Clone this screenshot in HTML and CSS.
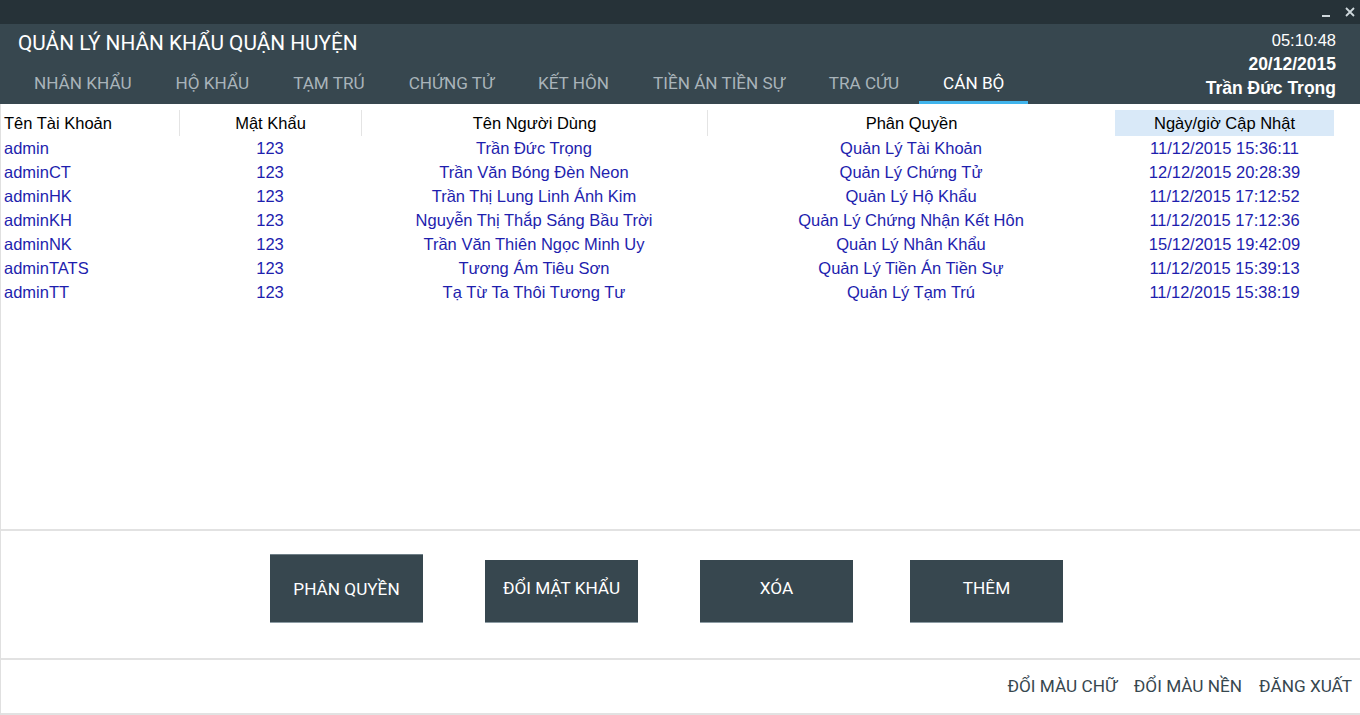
FILE: index.html
```html
<!DOCTYPE html>
<html lang="vi">
<head>
<meta charset="utf-8">
<title>Quản lý nhân khẩu quận huyện</title>
<link rel="stylesheet" href="styles.css">
</head>
<body>
<div class="app">
  <div class="titlebar">
    <svg class="win-btn" width="14" height="14" viewBox="0 0 14 14"><rect x="3" y="10" width="8" height="2" fill="#cfd8dc"/></svg>
    <svg class="win-btn" width="14" height="14" viewBox="0 0 14 14"><path d="M3 3 L11 11 M11 3 L3 11" stroke="#cfd8dc" stroke-width="1.8"/></svg>
  </div>
  <header class="header">
    <div class="header-left">
      <div class="app-title">QUẢN LÝ NHÂN KHẨU QUẬN HUYỆN</div>
      <nav class="tabs">
        <span class="tab">NHÂN KHẨU</span>
        <span class="tab">HỘ KHẨU</span>
        <span class="tab">TẠM TRÚ</span>
        <span class="tab">CHỨNG TỬ</span>
        <span class="tab">KẾT HÔN</span>
        <span class="tab">TIỀN ÁN TIỀN SỰ</span>
        <span class="tab">TRA CỨU</span>
        <span class="tab active">CÁN BỘ</span>
      </nav>
    </div>
    <div class="header-right">
      <div class="clock">05:10:48</div>
      <div class="date">20/12/2015</div>
      <div class="user">Trần Đức Trọng</div>
    </div>
  </header>
  <main class="content">
    <section class="grid-wrap">
      <div class="grid">
        <div class="hcell c1">Tên Tài Khoản</div>
        <div class="hcell c2 sep">Mật Khẩu</div>
        <div class="hcell c3 sep">Tên Người Dùng</div>
        <div class="hcell c4 sep">Phân Quyền</div>
        <div class="hcell c5 sorted">Ngày/giờ Cập Nhật</div>
        <div class="hcell c6"></div>

        <div class="cell c1">admin</div><div class="cell">123</div><div class="cell">Trần Đức Trọng</div><div class="cell">Quản Lý Tài Khoản</div><div class="cell">11/12/2015 15:36:11</div><div class="cell"></div>
        <div class="cell c1">adminCT</div><div class="cell">123</div><div class="cell">Trần Văn Bóng Đèn Neon</div><div class="cell">Quản Lý Chứng Tử</div><div class="cell">12/12/2015 20:28:39</div><div class="cell"></div>
        <div class="cell c1">adminHK</div><div class="cell">123</div><div class="cell">Trần Thị Lung Linh Ánh Kim</div><div class="cell">Quản Lý Hộ Khẩu</div><div class="cell">11/12/2015 17:12:52</div><div class="cell"></div>
        <div class="cell c1">adminKH</div><div class="cell">123</div><div class="cell">Nguyễn Thị Thắp Sáng Bầu Trời</div><div class="cell">Quản Lý Chứng Nhận Kết Hôn</div><div class="cell">11/12/2015 17:12:36</div><div class="cell"></div>
        <div class="cell c1">adminNK</div><div class="cell">123</div><div class="cell">Trần Văn Thiên Ngọc Minh Uy</div><div class="cell">Quản Lý Nhân Khẩu</div><div class="cell">15/12/2015 19:42:09</div><div class="cell"></div>
        <div class="cell c1">adminTATS</div><div class="cell">123</div><div class="cell">Tương Ám Tiêu Sơn</div><div class="cell">Quản Lý Tiền Án Tiền Sự</div><div class="cell">11/12/2015 15:39:13</div><div class="cell"></div>
        <div class="cell c1">adminTT</div><div class="cell">123</div><div class="cell">Tạ Từ Ta Thôi Tương Tư</div><div class="cell">Quản Lý Tạm Trú</div><div class="cell">11/12/2015 15:38:19</div><div class="cell"></div>
      </div>
    </section>
    <section class="actions">
      <button class="btn focused">PHÂN QUYỀN</button>
      <button class="btn">ĐỔI MẬT KHẨU</button>
      <button class="btn">XÓA</button>
      <button class="btn last">THÊM</button>
    </section>
    <footer class="footer">
      <span class="link">ĐỔI MÀU CHỮ</span>
      <span class="link">ĐỔI MÀU NỀN</span>
      <span class="link">ĐĂNG XUẤT</span>
    </footer>
  </main>
</div>
</body>
</html>
```
FILE: styles.css
```css
* { box-sizing: border-box; }
html, body {
  margin: 0;
  padding: 0;
  width: 1360px;
  height: 715px;
  overflow: hidden;
  background: #ffffff;
}
.app {
  width: 1360px;
  height: 715px;
  display: flex;
  flex-direction: column;
}
.titlebar {
  height: 24px;
  background: #263238;
  display: flex;
  justify-content: flex-end;
  align-items: center;
  gap: 10px;
  padding-right: 3px;
}
.win-btn { display: block; }

.header {
  height: 80px;
  background: #37474f;
  display: flex;
  justify-content: space-between;
}
.header-left {
  display: flex;
  flex-direction: column;
  justify-content: space-between;
}
.app-title {
  font-family: Roboto, "Noto Sans", sans-serif;
  font-size: 20.8px;
  color: #ffffff;
  line-height: 24px;
  padding: 7px 0 0 18px;
}
.tabs {
  display: flex;
  padding-left: 12px;
  height: 36px;
}
.tab {
  font-family: Roboto, "Noto Sans", sans-serif;
  font-size: 17.15px;
  color: #a9b4ba;
  padding: 0 22px;
  line-height: 31px;
  border-bottom: 3px solid transparent;
  height: 36px;
  white-space: nowrap;
}
.tab.active {
  color: #ffffff;
  border-bottom-color: #40b4ec;
  padding: 0 24px;
  margin: 0 -2px;
}
.header-right {
  padding: 4px 24px 0 0;
  text-align: right;
  font-family: "Liberation Sans", Arial, sans-serif;
  color: #ffffff;
}
.clock { font-size: 16.5px; line-height: 24px; }
.date, .user { font-size: 17.5px; line-height: 24px; font-weight: bold; }

.content {
  flex: 1;
  display: flex;
  flex-direction: column;
  border-left: 1px solid #e0e0e0;
}
.grid-wrap {
  height: 427px;
  padding-top: 6px;
  border-bottom: 2px solid #e2e2e2;
}
.grid {
  display: grid;
  grid-template-columns: 178px 182px 346px 408px 219px 1fr;
  grid-template-rows: 26px;
  grid-auto-rows: 24px;
  font-family: "Liberation Sans", Arial, sans-serif;
  font-size: 16.5px;
}
.hcell {
  height: 26px;
  line-height: 27px;
  color: #000000;
  text-align: center;
}
.hcell.sep { border-left: 1px solid #e4e4e4; }
.hcell.sorted { background: #d9e9f8; }
.cell {
  line-height: 25px;
  color: #1e1eae;
  text-align: center;
  white-space: nowrap;
}
.c1 { text-align: left; padding-left: 3px; }

.actions {
  height: 129px;
  display: flex;
  align-items: flex-end;
  padding: 0 0 35px 269px;
  gap: 62px;
  border-bottom: 2px solid #e2e2e2;
}
.btn {
  width: 153px;
  height: 63px;
  background: #37474f;
  color: #ffffff;
  border: none;
  border-bottom: 1px solid #8d9ca4;
  font-family: Roboto, "Noto Sans", sans-serif;
  font-size: 17.2px;
  padding: 0 0 6px 0;
  display: flex;
  align-items: center;
  justify-content: center;
}
.btn.focused {
  height: 69px;
  padding: 0;
  border-top: 1px solid #6f7f87;
}
.btn.last { margin-left: -5px; }

.footer {
  height: 55px;
  display: flex;
  justify-content: flex-end;
  align-items: center;
  gap: 17px;
  padding: 0 8px 2px 0;
  border-bottom: 2px solid #e2e2e2;
}
.link {
  font-family: Roboto, "Noto Sans", sans-serif;
  font-size: 17.2px;
  color: #37474f;
}
```
